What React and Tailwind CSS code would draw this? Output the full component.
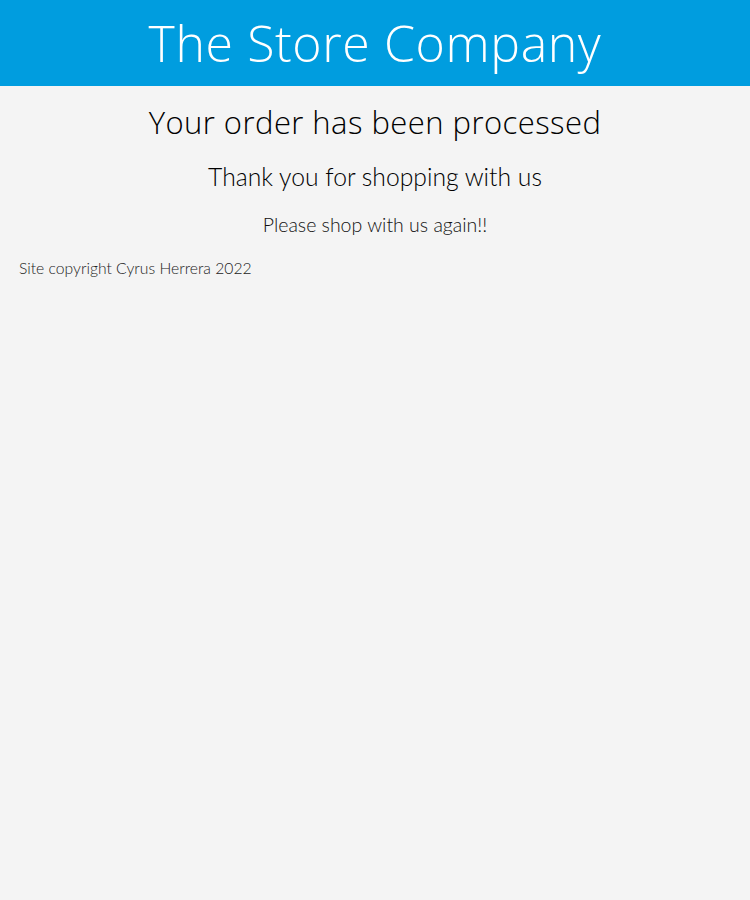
export default function App() {
  return (
    <div className="min-h-[900px] bg-[#f4f4f4] font-['Lato',sans-serif] font-light text-black">
      <header className="flex h-[86px] items-center justify-center bg-[#009ddf]">
        <h1 className="font-['Open_Sans',sans-serif] text-[50px] font-light tracking-[0.6px] text-white">
          The Store Company
        </h1>
      </header>
      <main className="flex flex-col items-center">
        <h2 className="mt-[14px] font-['Open_Sans',sans-serif] text-[31px] font-light leading-[44px] tracking-[0.45px]">
          Your order has been processed
        </h2>
        <h3 className="mt-[18px] text-[24.7px] leading-[30px]">Thank you for shopping with us</h3>
        <p className="mt-[21px] text-[19.5px] leading-[24px] text-[#111]">Please shop with us again!!</p>
      </main>
      <footer className="mt-[21px] px-[19px] text-[15.7px] leading-[20px] text-[#222]">
        Site copyright Cyrus Herrera 2022
      </footer>
    </div>
  );
}
